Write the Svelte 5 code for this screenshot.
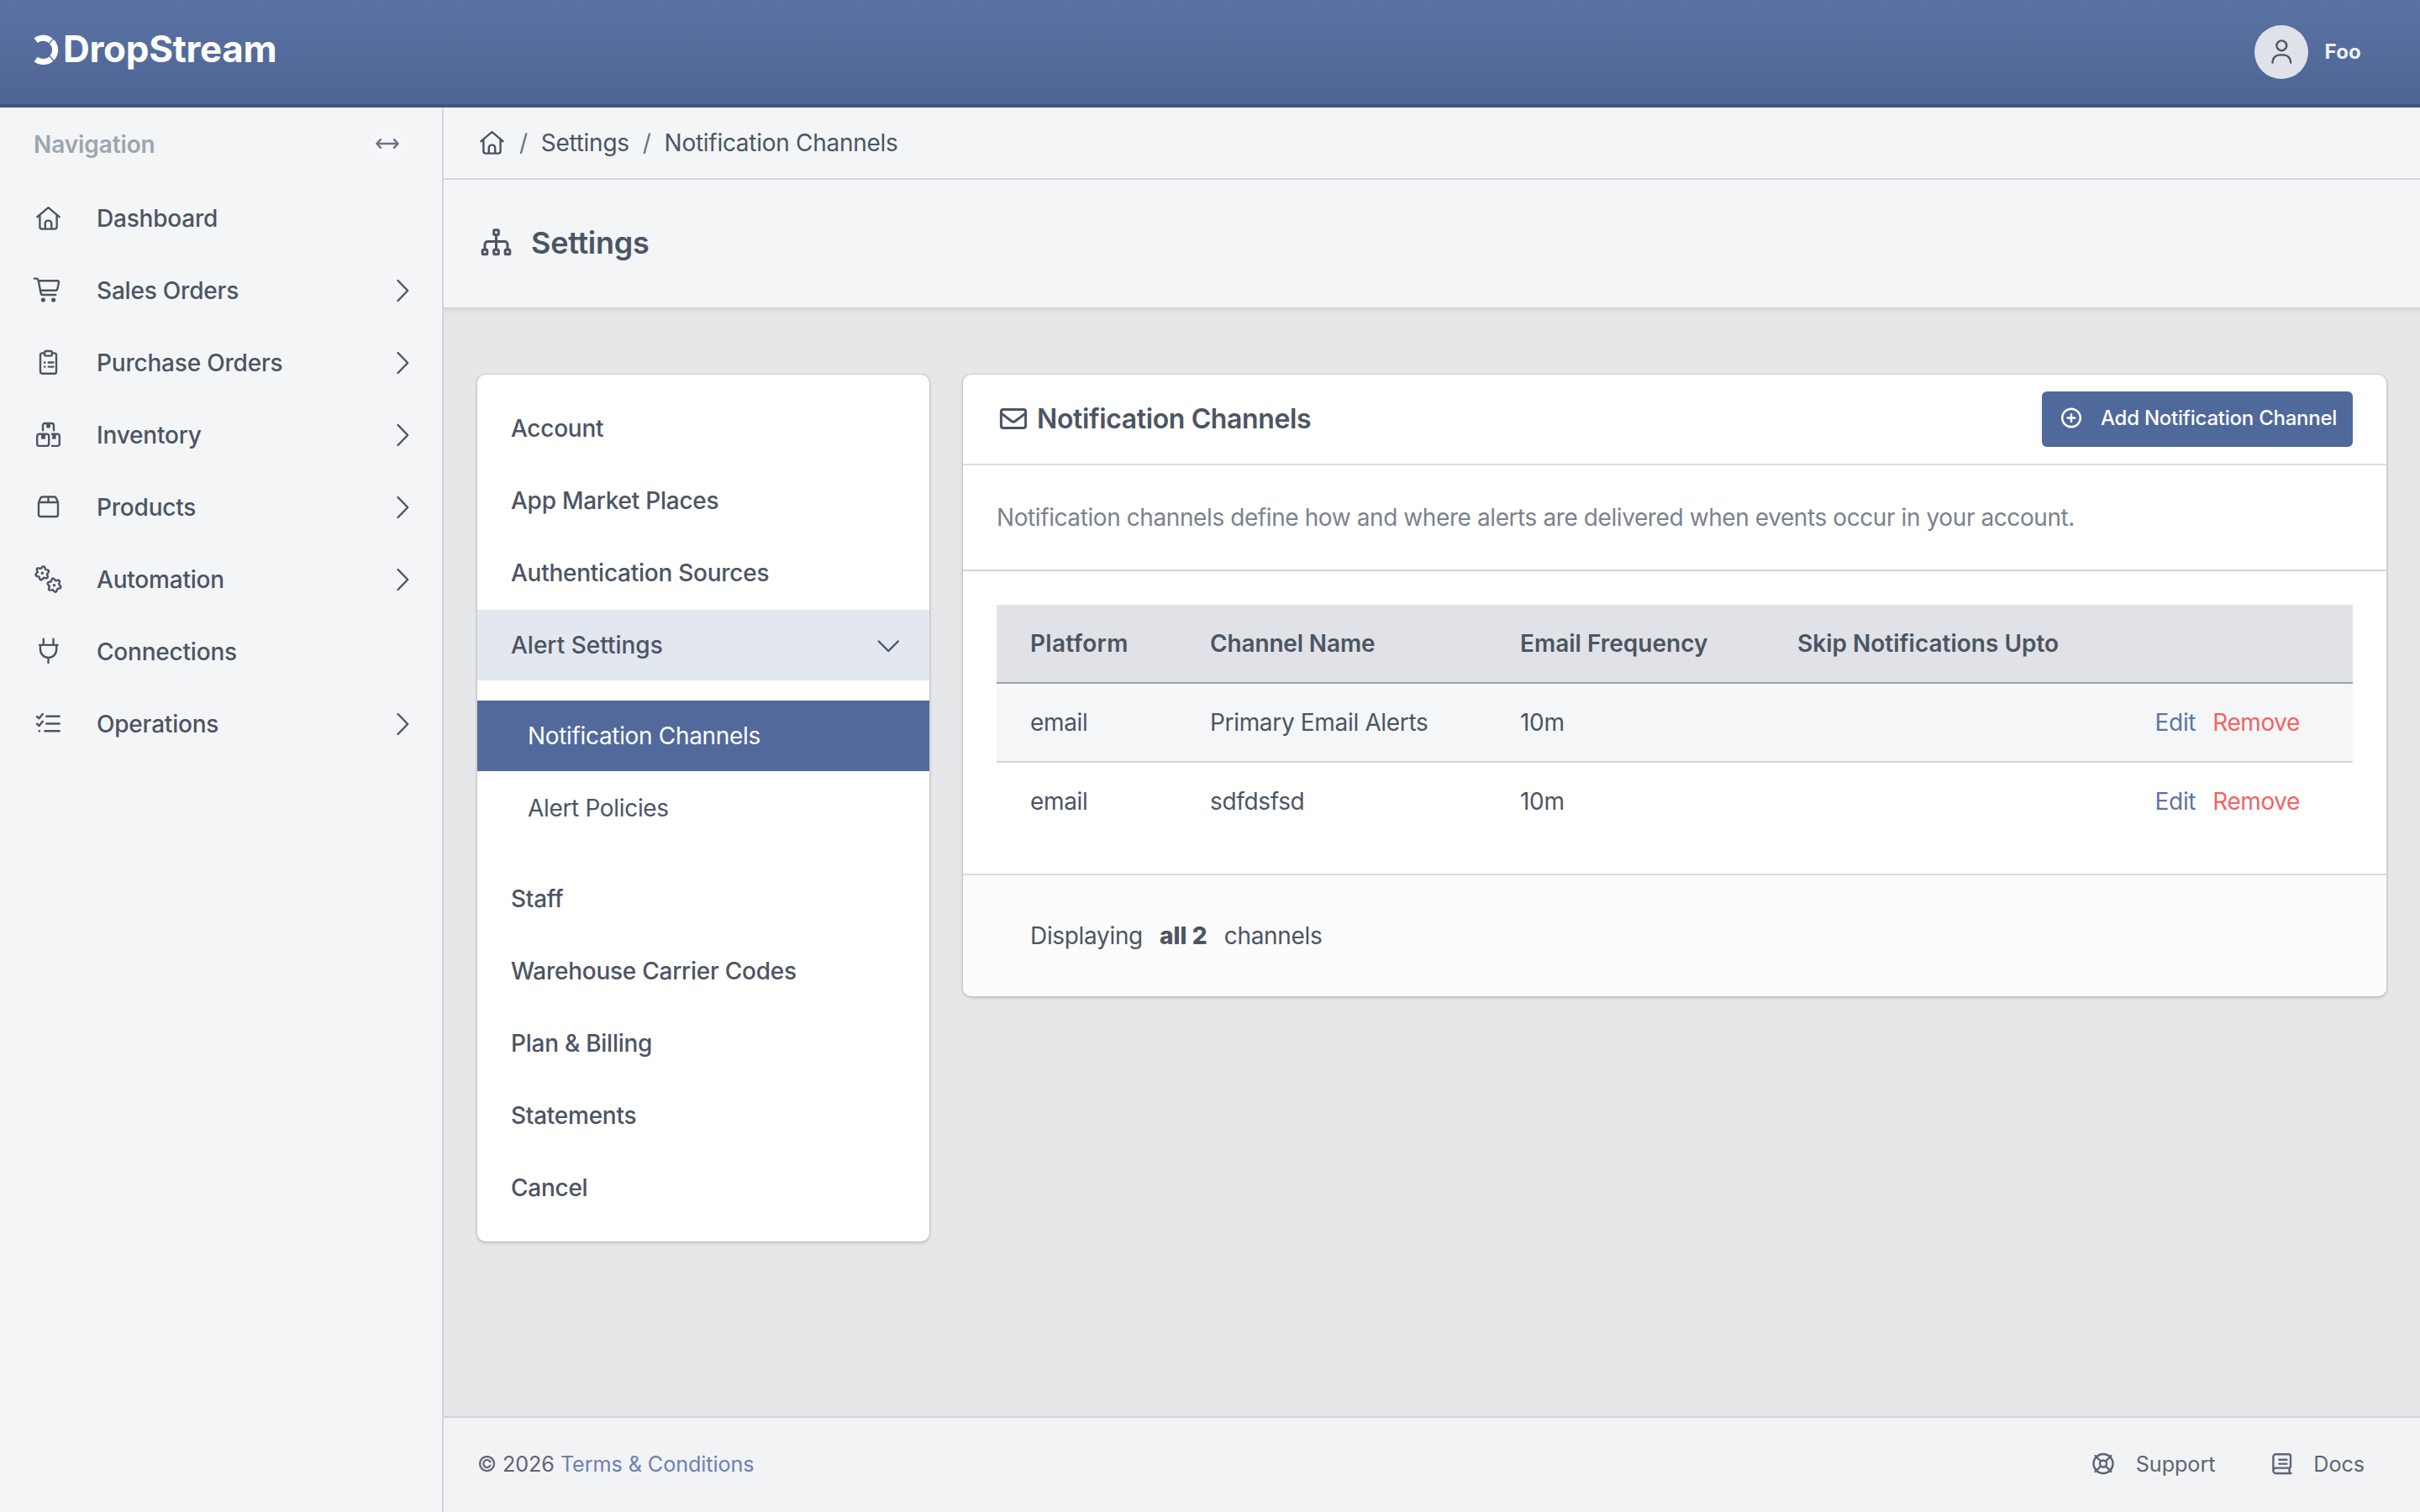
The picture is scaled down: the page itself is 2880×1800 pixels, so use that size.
<script lang="ts">
    // closed outline of a six-toothed gear
    function gear(cx: number, cy: number, phase: number) {
        let d = '';
        for (let a = 0; a < 360; a += 6) {
            const rad = a * Math.PI / 180;
            const r = 7 + 1.2 * Math.cos(6 * (rad - phase * Math.PI / 180));
            d += `${a ? 'L' : 'M'}${(cx + r * Math.cos(rad)).toFixed(2)} ${(cy + r * Math.sin(rad)).toFixed(2)}`;
        }
        return d + 'Z';
    }

    const home = 'M6.4 18.2 19.5 7.2 32.6 18.2M9.4 16V30a2.6 2.6 0 0 0 2.6 2.6h15a2.6 2.6 0 0 0 2.6-2.6V16M15.8 32.6v-6.6a3.2 3.2 0 0 1 3.2-3.4h1a3.2 3.2 0 0 1 3.2 3.4v6.6';

    const nav = [{
        text: 'Dashboard',
        stroke: home
    }, {
        text: 'Sales Orders',
        stroke: 'M3 5.6h2.6a2 2 0 0 1 1.9 1.6L10.6 23a2.4 2.4 0 0 0 2.3 2h15.3M8 8.2h22.4a1.6 1.6 0 0 1 1.6 1.9l-1.6 7.6a2.4 2.4 0 0 1-2.4 2H10',
        fill: 'M13.4 28.4a2.6 2.6 0 1 1 0 5.2 2.6 2.6 0 0 1 0-5.2ZM25.6 28.4a2.6 2.6 0 1 1 0 5.2 2.6 2.6 0 0 1 0-5.2Z',
        more: true
    }, {
        text: 'Purchase Orders',
        stroke: 'M15 8.4h-2.6A2.4 2.4 0 0 0 10 10.8v19.6a2.4 2.4 0 0 0 2.4 2.4h14.2a2.4 2.4 0 0 0 2.4-2.4V10.8a2.4 2.4 0 0 0-2.4-2.4H24M17 6h5a2 2 0 0 1 2 2v1.6a2 2 0 0 1-2 2h-5a2 2 0 0 1-2-2V8a2 2 0 0 1 2-2ZM15 19.5h.3M19.8 19.5h5.6M15 24.6h.3M19.8 24.6h5.6',
        more: true
    }, {
        text: 'Inventory',
        stroke: 'M13 14.3V8.4A2.4 2.4 0 0 1 15.4 6h8.2A2.4 2.4 0 0 1 26 8.4v5.9M8.6 18.7h9.2a2.4 2.4 0 0 1 2.4 2.4v9.4a2.4 2.4 0 0 1-2.4 2.4H8.6a2.4 2.4 0 0 1-2.4-2.4v-9.4a2.4 2.4 0 0 1 2.4-2.4ZM24 18.7h6.4a2.4 2.4 0 0 1 2.4 2.4v9.4a2.4 2.4 0 0 1-2.4 2.4H24',
        fill: 'M17.2 6h4.6v4.6a1 1 0 0 1-1 1h-2.6a1 1 0 0 1-1-1ZM11 18.7h5v5a1 1 0 0 1-1 1h-3a1 1 0 0 1-1-1ZM24.2 18.7h4.4v5a1 1 0 0 1-1 1h-3.4Z',
        more: true
    }, {
        text: 'Products',
        stroke: 'M8 14v14.6a2.4 2.4 0 0 0 2.4 2.4h18.2a2.4 2.4 0 0 0 2.4-2.4V14M8 14l2.2-5a2.4 2.4 0 0 1 2.2-1.5h14.2a2.4 2.4 0 0 1 2.2 1.5L31 14ZM19.5 7.5V14',
        more: true
    }, {
        text: 'Automation',
        stroke: gear(12.3, 12.3, -78) + gear(26.5, 26.7, -102),
        fill: 'M12.3 10.5a1.8 1.8 0 1 1 0 3.6 1.8 1.8 0 0 1 0-3.6ZM26.5 24.9a1.8 1.8 0 1 1 0 3.6 1.8 1.8 0 0 1 0-3.6Z',
        more: true
    }, {
        text: 'Connections',
        stroke: 'M13.8 4.8v7M25.5 4.8v7M9 11.9h21.5M10 12v5.3a9.6 9.6 0 0 0 19.2 0V12M19.5 27v6'
    }, {
        text: 'Operations',
        stroke: 'M6 11l2.6 2.3L12.8 8M6 19.7l2.6 2.3 4.2-5.3M17.2 10.8h15.5M17.2 19.5h15.5M15.5 28.3h17.2M8.7 28.3h.3',
        more: true
    }];

    const settingsTop = ['Account', 'App Market Places', 'Authentication Sources'];
    const settingsBottom = ['Staff', 'Warehouse Carrier Codes', 'Plan & Billing', 'Statements', 'Cancel'];

    const channels = [
        { platform: 'email', name: 'Primary Email Alerts', frequency: '10m', skip: '' },
        { platform: 'email', name: 'sdfdsfsd', frequency: '10m', skip: '' }
    ];

    let alertsOpen = $state(true);
    let currentAlert = $state('Notification Channels');
</script>

<div class="page">
    <header class="topbar">
        <a class="logo" href="#/">
            <svg width="36" height="40" viewBox="0 0 36 40">
                <path d="M6.7 10.2A14.2 14.2 0 1 1 6.7 32.6" />
                <path class="cut" d="M22 14.6 29 6.2M22.6 28.4 30.4 36.4" />
            </svg>
            <span>DropStream</span>
        </a>
        <div class="user">
            <span class="avatar">
                <svg width="64" height="64" viewBox="0 0 64 64">
                    <circle cx="32.3" cy="24.3" r="5.9" />
                    <path d="M21.5 44.6v-.6a8.6 8.6 0 0 1 8.6-8.6h4.4a8.6 8.6 0 0 1 8.6 8.6v.6" />
                </svg>
            </span>
            <span>Foo</span>
        </div>
    </header>

    <div class="body">
        <nav class="sidebar">
            <div class="sidebar-head">
                <span>Navigation</span>
                <button class="collapse" aria-label="Collapse navigation">
                    <svg width="48" height="48" viewBox="0 0 48 48">
                        <path d="M11.5 23h25M16 18.2 11.3 23l4.7 4.8M32 18.2l4.7 4.8-4.7 4.8" />
                    </svg>
                </button>
            </div>
            {#each nav as item}
                <a class="nav-item" href="#/">
                    <svg width="40" height="40" viewBox="0 0 40 40">
                        <path d={item.stroke} />
                        {#if item.fill}<path class="solid" d={item.fill} />{/if}
                    </svg>
                    <span>{item.text}</span>
                    {#if item.more}
                        <svg class="more" width="16" height="28" viewBox="0 0 16 28">
                            <path d="M1.6 2 13.2 14 1.6 26" />
                        </svg>
                    {/if}
                </a>
            {/each}
        </nav>

        <div class="main">
            <div class="breadcrumb">
                <svg width="40" height="40" viewBox="0 0 40 40"><path d={home} /></svg>
                <i>/</i>
                <a href="#/">Settings</a>
                <i>/</i>
                <a href="#/">Notification Channels</a>
            </div>
            <div class="title">
                <svg class="sitemap" width="38" height="34" viewBox="0 0 38 34">
                    <path d="M18.5 8v16M5 24v-5a3.4 3.4 0 0 1 3.4-3.4h20.2A3.4 3.4 0 0 1 32 19v5" />
                    <rect x="15.7" y="1.8" width="5.6" height="5.6" rx="1" />
                    <rect x="2.2" y="25.2" width="5.6" height="5.6" rx="1" />
                    <rect x="15.7" y="25.2" width="5.6" height="5.6" rx="1" />
                    <rect x="29.2" y="25.2" width="5.6" height="5.6" rx="1" />
                </svg>
                <h1>Settings</h1>
            </div>

            <div class="content">
                <aside class="card menu">
                    {#each settingsTop as text}
                        <a class="menu-item" href="#/">{text}</a>
                    {/each}
                    <button class="menu-item menu-item_open" onclick={() => alertsOpen = !alertsOpen}>
                        Alert Settings
                        <svg width="28" height="18" viewBox="0 0 28 18">
                            <path d="M2.8 4.5 14.3 16 25.8 4.5" />
                        </svg>
                    </button>
                    {#if alertsOpen}
                        <div class="submenu">
                            {#each ['Notification Channels', 'Alert Policies'] as text}
                                <button class="menu-item sub-item" class:sub-item_active={currentAlert === text} onclick={() => currentAlert = text}>{text}</button>
                            {/each}
                        </div>
                    {/if}
                    {#each settingsBottom as text}
                        <a class="menu-item" href="#/">{text}</a>
                    {/each}
                </aside>

                <section class="card panel">
                    <div class="panel-head">
                        <svg class="mail" width="34" height="26" viewBox="0 0 34 26">
                            <rect x="2.4" y="1.6" width="29.2" height="21.8" rx="2.6" />
                            <path d="M3 6.4 14.6 15.2a4 4 0 0 0 4.8 0L31 6.4" />
                        </svg>
                        <h2>Notification Channels</h2>
                        <button class="add">
                            <svg width="26" height="26" viewBox="0 0 26 26">
                                <circle cx="13" cy="12.5" r="10.8" />
                                <path d="M13 8.1v8.8M8.6 12.5h8.8" />
                            </svg>
                            Add Notification Channel
                        </button>
                    </div>
                    <p class="lead">Notification channels define how and where alerts are delivered when events occur in your account.</p>
                    <div class="table-wrap">
                        <table>
                            <thead>
                                <tr>
                                    <th class="col-platform">Platform</th>
                                    <th class="col-name">Channel Name</th>
                                    <th class="col-frequency">Email Frequency</th>
                                    <th class="col-skip">Skip Notifications Upto</th>
                                    <th></th>
                                </tr>
                            </thead>
                            <tbody>
                                {#each channels as channel}
                                    <tr>
                                        <td>{channel.platform}</td>
                                        <td>{channel.name}</td>
                                        <td>{channel.frequency}</td>
                                        <td>{channel.skip}</td>
                                        <td class="actions"><a href="#/">Edit</a><a class="remove" href="#/">Remove</a></td>
                                    </tr>
                                {/each}
                            </tbody>
                        </table>
                    </div>
                    <div class="panel-foot">
                        <span>Displaying</span>
                        <b>all {channels.length}</b>
                        <span>channels</span>
                    </div>
                </section>
            </div>

            <footer class="footer">
                <div>© 2026 <a class="terms" href="#/">Terms &amp; Conditions</a></div>
                <div class="links">
                    <a href="#/">
                        <svg width="28" height="28" viewBox="0 0 28 28">
                            <circle cx="14" cy="13.5" r="11.5" />
                            <circle cx="14" cy="13.5" r="4" />
                            <path d="M4.5 4l6.5 6.5M23.5 4 17 10.5M4.5 23 11 16.5M23.5 23 17 16.5" />
                        </svg>
                        Support
                    </a>
                    <a href="#/">
                        <svg width="24" height="28" viewBox="0 0 24 28">
                            <path d="M22.5 25H4.6a3.2 3.2 0 0 1 0-6.4H20a2 2 0 0 0 2-2V4.2a2 2 0 0 0-2-2H4.6a3.2 3.2 0 0 0-3.2 3.2v16.4M20.6 18.6V25M8.4 8.8h9M8.4 13.6h9" />
                        </svg>
                        Docs
                    </a>
                </div>
            </footer>
        </div>
    </div>
</div>

<style>
    :global(body) {
        margin: 0;
        background: #e6e7e9;
    }

    .page {
        display: flex;
        flex-direction: column;
        height: 1800px;
        font-family: Inter, "Liberation Sans", sans-serif;
        font-size: 28px;
        line-height: 40px;
        letter-spacing: -.33px;
        color: #4b5563;
    }

    a {
        color: inherit;
        text-decoration: none;
    }

    button {
        margin: 0;
        padding: 0;
        border: none;
        background: none;
        font: inherit;
        letter-spacing: inherit;
        color: inherit;
        text-align: left;
    }

    svg {
        display: block;
        flex: none;
        fill: none;
        stroke: currentColor;
        stroke-width: 2.4px;
        stroke-linecap: round;
        stroke-linejoin: round;
    }

    .solid {
        fill: currentColor;
        stroke: none;
    }

    /* top bar */
    .topbar {
        display: flex;
        flex: none;
        align-items: center;
        justify-content: space-between;
        box-sizing: border-box;
        height: 128px;
        padding: 0 70px 0 36px;
        border-bottom: 4px solid #3f547c;
        background: linear-gradient(#5b73a4, #4d6494);
    }

    .logo {
        display: flex;
        align-items: center;
        gap: 3px;
        padding-bottom: 9px;
        font-size: 44px;
        font-weight: 700;
        letter-spacing: -.3px;
        color: #fff;
    }

    .logo svg {
        stroke-width: 7px;
        stroke-linecap: butt;
    }

    .logo .cut {
        stroke: #546c9d;
        stroke-width: 1.4px;
    }

    .user {
        display: flex;
        align-items: center;
        gap: 20px;
        font-size: 24px;
        font-weight: 700;
        letter-spacing: .2px;
        color: #f1f2f5;
    }

    .avatar {
        border-radius: 50%;
        background: #dfe2e8;
        color: #4b5563;
    }

    .body {
        display: flex;
        flex: 1;
        min-height: 0;
    }

    /* sidebar */
    .sidebar {
        display: flex;
        flex: none;
        flex-direction: column;
        gap: 2px;
        width: 526px;
        border-right: 2px solid #d2d4dc;
        background: #f4f5f7;
        font-weight: 500;
        letter-spacing: -.2px;
    }

    .sidebar-head {
        display: flex;
        align-items: center;
        justify-content: space-between;
        padding: 20px 41px 20px 40px;
        font-weight: 600;
        letter-spacing: -.1px;
        color: #9ea5ae;
    }

    .collapse {
        border-radius: 50%;
        background: #f5f6f8;
        color: #6b7280;
    }

    .nav-item {
        display: flex;
        align-items: center;
        height: 84px;
        padding: 0 38px;
    }

    .nav-item span {
        margin-left: 37px;
    }

    .more {
        margin-left: auto;
    }

    /* main column */
    .main {
        display: flex;
        flex: 1;
        flex-direction: column;
        min-width: 0;
    }

    .breadcrumb {
        display: flex;
        flex: none;
        align-items: center;
        gap: 16px;
        height: 84px;
        padding-left: 38px;
        border-bottom: 2px solid #d2d4dc;
        background: #f4f5f7;
        letter-spacing: -.28px;
    }

    .breadcrumb svg {
        margin-right: -4px;
    }

    .breadcrumb i {
        font-style: normal;
        color: #6b7280;
    }

    .title {
        display: flex;
        flex: none;
        align-items: center;
        gap: 22px;
        height: 150px;
        padding: 0 0 2px 44px;
        background: #f4f5f7;
    }

    .sitemap {
        stroke-width: 3px;
    }

    h1 {
        margin: 0;
        font-size: 36px;
        font-weight: 600;
        letter-spacing: -.28px;
    }

    /* the gradient is the shade the title bar casts on the content */
    .content {
        display: flex;
        flex: 1;
        align-items: flex-start;
        gap: 40px;
        padding: 80px 40px 0;
        background: linear-gradient(#cfd0d2, #dcdddf 3px, #e6e7e9 8px);
    }

    .card {
        overflow: hidden;
        border-radius: 10px;
        background: #fff;
        box-shadow: 0 2px 4px rgba(0, 0, 0, .14), 0 0 3px rgba(0, 0, 0, .22);
    }

    .menu {
        display: flex;
        flex: none;
        flex-direction: column;
        gap: 2px;
        width: 538px;
        padding: 22px 0;
    }

    .menu-item {
        display: flex;
        align-items: center;
        justify-content: space-between;
        height: 84px;
        padding: 0 35px 0 40px;
        font-weight: 500;
        letter-spacing: -.26px;
    }

    .menu-item_open {
        background: #e3e7f0;
        letter-spacing: 0;
    }

    .submenu {
        display: flex;
        flex-direction: column;
        gap: 2px;
        padding: 22px 0;
    }

    .sub-item {
        padding-left: 60px;
        font-weight: 400;
        letter-spacing: -.33px;
    }

    .sub-item_active {
        background: #52699b;
        color: #fff;
    }

    .panel {
        flex: 1;
    }

    .panel-head {
        display: flex;
        align-items: center;
        height: 106px;
        padding: 0 40px 0 43px;
        border-bottom: 2px solid #dcdde0;
    }

    .mail {
        margin-right: 11px;
        stroke-width: 3px;
    }

    h2 {
        margin: 0 auto 0 0;
        font-size: 32px;
        font-weight: 600;
        letter-spacing: -.38px;
    }

    .add {
        display: flex;
        align-items: center;
        gap: 22px;
        box-sizing: border-box;
        width: 370px;
        height: 66px;
        padding: 0 0 2px 22px;
        border-radius: 6px;
        background: #50699b;
        font-size: 24px;
        font-weight: 500;
        letter-spacing: -.24px;
        white-space: nowrap;
        color: #fff;
    }

    .lead {
        margin: 0;
        padding: 42px 40px;
        border-bottom: 2px solid #d2d6dc;
        letter-spacing: -.41px;
        color: #7a828d;
    }

    .table-wrap {
        padding: 40px;
    }

    table {
        width: 100%;
        table-layout: fixed;
        border-collapse: separate;
        border-spacing: 0;
    }

    th,
    td {
        height: 92px;
        padding: 0 0 0 40px;
        text-align: left;
    }

    th {
        border-bottom: 2px solid #98a1b2;
        background: #e0e2e7;
        font-weight: 600;
        letter-spacing: 0;
        white-space: nowrap;
    }

    .col-platform {
        width: 174px;
        letter-spacing: .3px;
    }

    .col-name {
        width: 329px;
        letter-spacing: -.15px;
    }

    .col-frequency {
        width: 290px;
    }

    .col-skip {
        width: 359px;
    }

    tbody tr:nth-child(odd) td {
        border-bottom: 2px solid #d2d6dc;
        background: #f5f6f7;
    }

    .actions {
        padding: 0 63px 0 0;
        text-align: right;
        color: #5c74a6;
    }

    .remove {
        margin-left: 20px;
        letter-spacing: -.4px;
        color: #f16464;
    }

    .panel-foot {
        display: flex;
        gap: 20px;
        padding: 52px 80px;
        border-top: 2px solid #dcdcdd;
        background: #fbfbfb;
    }

    .panel-foot b {
        font-weight: 800;
        letter-spacing: .1px;
    }

    /* page footer */
    .footer {
        display: flex;
        flex: none;
        align-items: center;
        justify-content: space-between;
        height: 110px;
        padding: 0 66px 2px 40px;
        border-top: 2px solid #d2d4dc;
        background: #f2f3f5;
        font-size: 25.2px;
        letter-spacing: -.08px;
        color: #5c6673;
    }

    .terms {
        color: #6c82b1;
    }

    .links,
    .links a {
        display: flex;
        align-items: center;
    }

    .links {
        gap: 68px;
    }

    .links a {
        gap: 25px;
    }
</style>
